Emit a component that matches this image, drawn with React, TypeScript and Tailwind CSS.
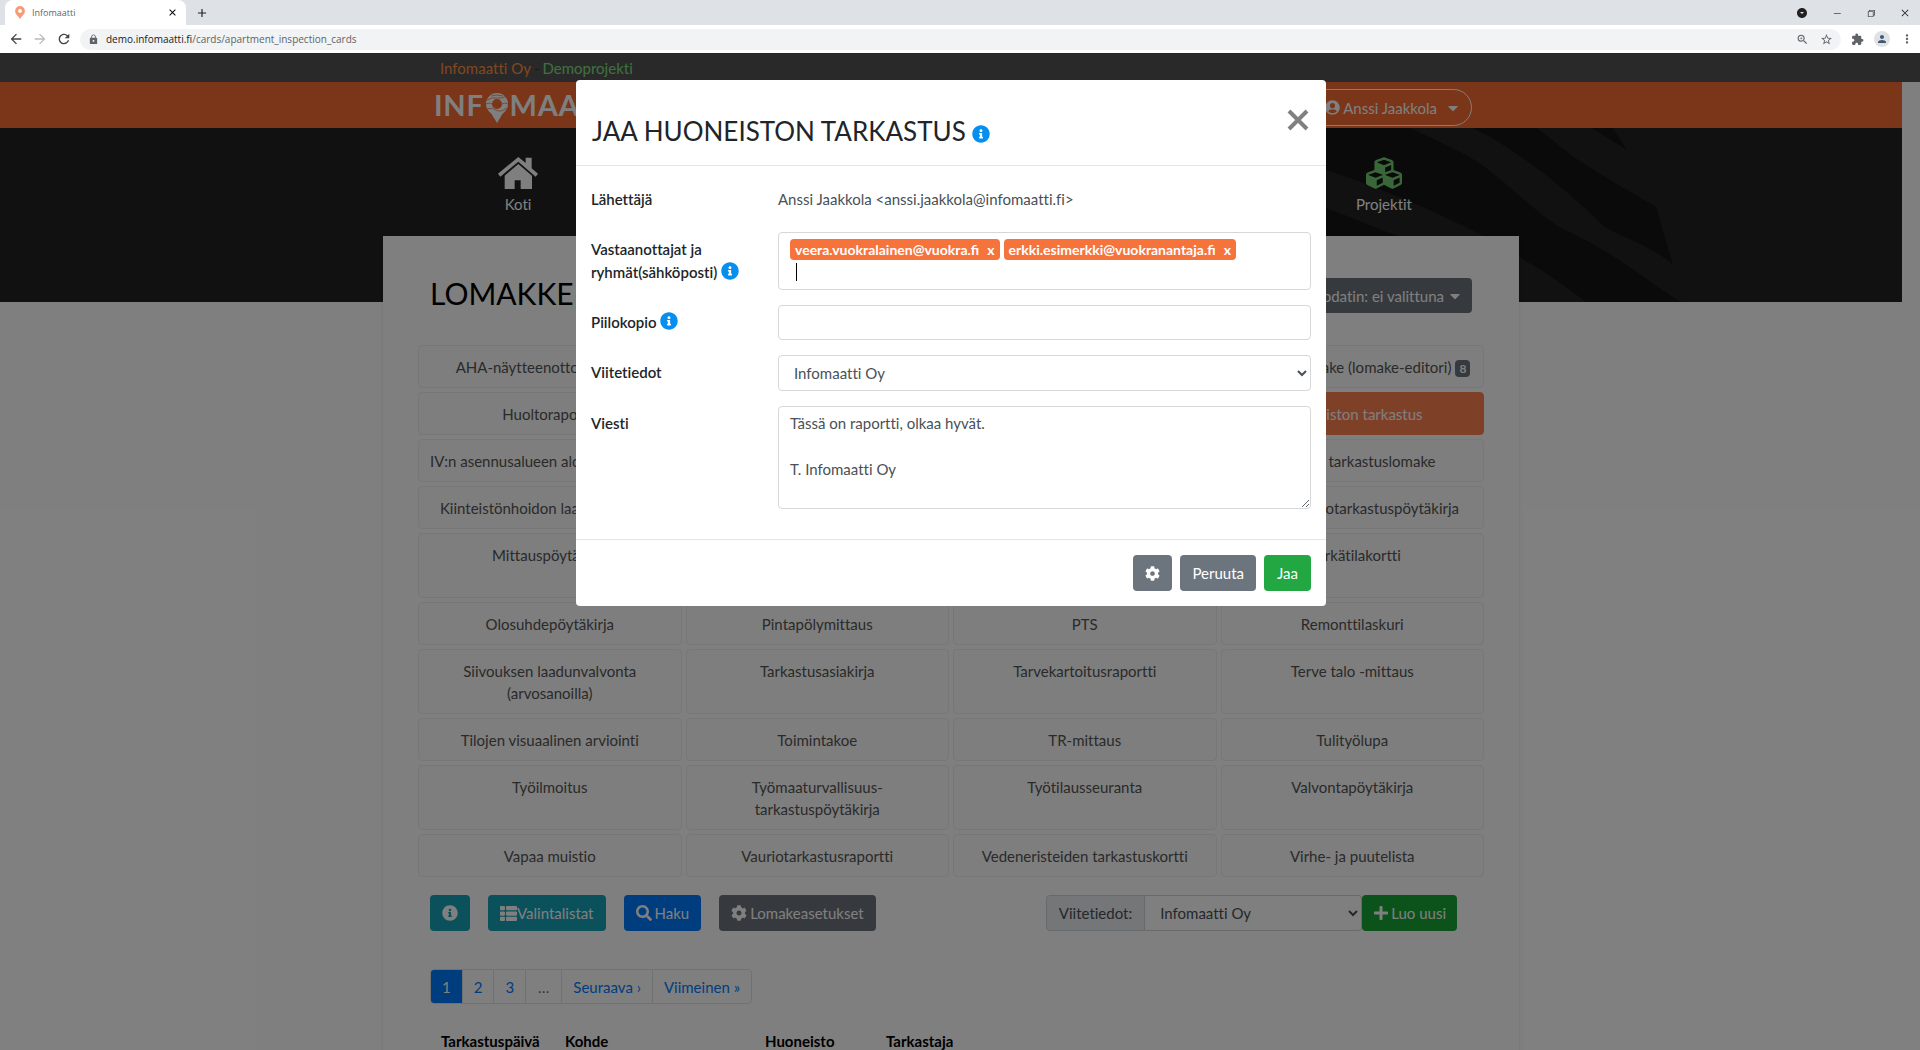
import React from 'react';
import { FaCubes, FaInfoCircle, FaUserCircle, FaCaretDown, FaThList, FaSearch, FaCog, FaPlus } from 'react-icons/fa';
import { MdArrowBack, MdArrowForward, MdRefresh, MdLock, MdZoomIn, MdStarBorder, MdExtension, MdPerson, MdMoreVert, MdArrowDropDownCircle, MdClose, MdAdd } from 'react-icons/md';
import { VscChromeMinimize, VscChromeRestore, VscChromeClose } from 'react-icons/vsc';

const forms = [
  'AHA-näytteenottopöytäkirja', 'Asbestikartoitus', 'Energiaselvitys', 'Esimerkkilomake (lomake-editori)',
  'Huoltoraportti', 'Huoltokirja', 'Huomautus', 'Huoneiston tarkastus',
  'IV:n asennusalueen aloituspöytäkirja', 'IV-mittaus', 'Katselmus', 'Kohteen tarkastuslomake',
  'Kiinteistönhoidon laadunvalvonta', 'Kosteusmittaus', 'Kuntoarvio', 'Käyttöönottotarkastuspöytäkirja',
  'Mittauspöytäkirja', 'Muistio', 'Määrälaskenta\n(tilat)', 'Märkätilakortti',
  'Olosuhdepöytäkirja', 'Pintapölymittaus', 'PTS', 'Remonttilaskuri',
  'Siivouksen laadunvalvonta (arvosanoilla)', 'Tarkastusasiakirja', 'Tarvekartoitusraportti', 'Terve talo -mittaus',
  'Tilojen visuaalinen arviointi', 'Toimintakoe', 'TR-mittaus', 'Tulityölupa',
  'Työilmoitus', 'Työmaaturvallisuus-\ntarkastuspöytäkirja', 'Työtilausseuranta', 'Valvontapöytäkirja',
  'Vapaa muistio', 'Vauriotarkastusraportti', 'Vedeneristeiden tarkastuskortti', 'Virhe- ja puutelista',
];

const recipients = ['veera.vuokralainen@vuokra.fi', 'erkki.esimerkki@vuokranantaja.fi'];

const BrowserChrome: React.FC = () => (
  <div className="shrink-0 font-['Open_Sans',sans-serif] text-[#5f6368]">
    <div className="flex h-[25px] items-center justify-between bg-[#dee1e6] pl-[5px]">
      <div className="flex h-full items-center">
        <div className="flex h-full w-[181px] items-center rounded-t-lg bg-white px-2">
          <svg viewBox="0 0 12 16" className="mx-[2px] h-[13px] w-[10px]">
            <path d="M6 0a6 6 0 0 0-6 6c0 4 3 5 6 10 3-5 6-6 6-10a6 6 0 0 0-6-6z" fill="#f79a76" />
            <circle cx="6" cy="6" r="2.4" fill="#fff" />
          </svg>
          <span className="ml-[5px] flex-1 text-[9px]">Infomaatti</span>
          <MdClose className="size-[11px] text-black" />
        </div>
        <MdAdd className="ml-[9px] size-[14px] text-[#222]" />
      </div>
      <div className="flex items-center gap-6 pr-[10px] text-[#222]">
        <MdArrowDropDownCircle className="size-3" />
        <VscChromeMinimize className="size-[10px]" />
        <VscChromeRestore className="size-[10px]" />
        <VscChromeClose className="size-[10px]" />
      </div>
    </div>
    <div className="flex h-7 items-center bg-white pl-2 pr-[6px]">
      <MdArrowBack className="size-4 text-[#444]" />
      <MdArrowForward className="ml-2 size-4 text-[#bbb]" />
      <MdRefresh className="ml-2 size-4 text-[#444]" />
      <div className="ml-2 flex h-[21px] flex-1 items-center rounded-full bg-[#f1f3f4] px-2">
        <MdLock className="size-[11px]" />
        <span className="ml-[7px] flex-1 text-[10px]"><span className="text-[#202124]">demo.infomaatti.fi</span>/cards/apartment_inspection_cards</span>
        <MdZoomIn className="size-[13px]" />
        <MdStarBorder className="ml-[11px] size-[13px]" />
      </div>
      <MdExtension className="ml-[10px] size-[13px]" />
      <span className="ml-[10px] flex size-4 items-center justify-center rounded-full bg-[#dee1e6]"><MdPerson className="size-3 text-[#41586e]" /></span>
      <MdMoreVert className="ml-[10px] size-[14px]" />
    </div>
  </div>
);

const Logo: React.FC = () => (
  <a href="#" className="flex items-center text-[29px] font-bold tracking-wide text-white">
    INF
    <svg viewBox="0 0 24 32" className="mx-px mt-[5px] h-8 w-6" fill="none">
      <circle cx="12" cy="12" r="8" stroke="#fff" strokeWidth="6" />
      <path d="M6 21h12l-6 10z" fill="#fff" />
      <path d="M2 8q5-3 10-2t10-2M1 12q3-2 6 0M2 17q5-2 9 1t11-2M17 12q3-2 6 0M6 4q6-2 12 0" stroke="#f66a31" strokeWidth="0.7" />
    </svg>
    MAATTI
  </a>
);

const House: React.FC = () => (
  <svg viewBox="0 0 120 96" className="h-8 w-10" fill="currentColor" aria-hidden="true">
    <path d="M61 0l22 18V2h18v32l19 16-7 9L61 14 7 59 0 50z" />
    <path d="M61 21l41 35v40H68V70H50v26H20V56z" />
  </svg>
);

const Stripes: React.FC = () => (
  <svg viewBox="0 0 577 174" className="absolute right-0 top-0 h-full w-[577px]" fill="#141414" aria-hidden="true">
    <path d="M0 0H85C110 12 130 20 151 33C190 60 215 90 240 102C300 130 330 160 357 174H261C230 150 210 138 194 129C150 100 60 60 0 42z" />
    <path d="M148 0H212L250 30C280 50 310 66 331 79L348 137C330 120 300 110 281 100C240 60 190 20 148 0z" />
    <path d="M267 0H288L302 22z" />
    <path d="M0 80C30 90 50 100 73 108H0z" />
  </svg>
);

const Info: React.FC = () => (
  <FaInfoCircle className="inline size-[18px] align-[-2px] text-[#078ff0]" />
);

const FormPage: React.FC = () => (
  <div>
    <div className="h-[29px] bg-[#525252]">
      <div className="mx-auto flex h-full max-w-[1040px] items-center gap-[3px] pr-[18px]">
        <a href="#" className="text-[#ff9040]">Infomaatti Oy</a>
        <span className="text-[#333]">-</span>
        <a href="#" className="text-[#80e080]">Demoprojekti</a>
      </div>
    </div>
    <div className="pr-[18px]">
      <header className="bg-[#f66a31]">
        <div className="mx-auto flex h-[46px] max-w-[1042px] items-center justify-between pl-1">
          <Logo />
          <button className="mb-[2px] flex h-[37px] items-center gap-[3px] self-end rounded-full border border-white pl-6 pr-[13px] text-white">
            <FaUserCircle className="size-[15px]" />
            Anssi Jaakkola
            <FaCaretDown className="ml-2 h-4 w-[10px]" />
          </button>
        </div>
      </header>
      <div className="relative h-[174px] bg-[#222]">
        <Stripes />
        <nav className="relative mx-auto flex max-w-[1042px] justify-between px-[53px] pt-[29px] text-white">
          <a href="#" className="flex w-[70px] flex-col items-center gap-1"><House />Koti</a>
          <a href="#" className="flex w-[70px] flex-col items-center gap-1"><FaCubes className="-my-0.5 size-9 text-[#74ce74]" />Projektit</a>
        </nav>
      </div>
      <main className="relative mx-auto -mt-[66px] max-w-[1136px] bg-white px-[35px] pb-10 pt-[42px] shadow">
        <div className="flex items-start justify-between px-3">
          <h1 className="text-[30px] leading-[30px] text-black">LOMAKKEET</h1>
          <button className="flex h-[35px] items-center gap-[6px] rounded bg-[#6c757d] px-3 text-white">Suodatin: ei valittuna <FaCaretDown className="h-4 w-[10px]" /></button>
        </div>
        <div className="mt-8 grid grid-cols-4 gap-1">
          {forms.map((name) => {
            const active = name === 'Huoneiston tarkastus';
            return (
              <button
                key={name}
                className={`flex items-start justify-center whitespace-pre-line rounded border px-1 pb-[9px] pt-[10px] ${active ? 'border-[#ff8150] bg-[#ff8150] text-white' : 'border-[#efefef] bg-[#fcfcfc] text-[#555]'}`}
              >
                <span className="max-w-[245px]">
                  {name}
                  {name.includes('editori') && <span className="ml-1 rounded bg-[#6c757d] px-1 py-px text-xs font-bold text-white">8</span>}
                </span>
              </button>
            );
          })}
        </div>
        <div className="mt-[18px] flex h-9 items-stretch pl-3 pr-[27px] text-white">
          <button aria-label="Ohje" className="rounded bg-[#17a2b8] px-3"><FaInfoCircle className="size-4" /></button>
          <button className="ml-[18px] flex items-center rounded bg-[#17a2b8] px-3"><FaThList className="size-[17px]" />Valintalistat</button>
          <button className="ml-[18px] flex items-center gap-[3px] rounded bg-[#007bff] px-3"><FaSearch className="size-4" />Haku</button>
          <button className="ml-[18px] flex items-center gap-[3px] rounded bg-[#6c757d] px-3"><FaCog className="size-4" />Lomakeasetukset</button>
          <label htmlFor="ref" className="ml-auto flex items-center rounded-l border border-[#ced4da] bg-[#e9ecef] px-3 text-[#495057]">Viitetiedot:</label>
          <select id="ref" className="w-[217px] rounded-r border border-l-0 border-[#ced4da] bg-white px-[11px] text-[#495057]"><option>Infomaatti Oy</option></select>
          <button className="flex items-center gap-[2px] rounded bg-[#17a637] px-[11px]"><FaPlus className="size-4" />Luo uusi</button>
        </div>
        <nav aria-label="Sivut" className="ml-3 mt-[38px] flex h-[35px] w-fit divide-x divide-[#dee2e6] overflow-hidden rounded border border-[#dee2e6] text-[#007bff]">
          <a href="#" className="bg-[#007bff] px-[11px] py-[6px] text-white">1</a>
          <a href="#" className="px-[11px] py-[6px]">2</a>
          <a href="#" className="px-[11px] py-[6px]">3</a>
          <span className="px-3 py-[6px] text-[#6c757d]">…</span>
          <a href="#" className="px-[11px] py-[6px]">Seuraava ›</a>
          <a href="#" className="px-[11px] py-[6px]">Viimeinen »</a>
        </nav>
        <table className="ml-3 mt-[18px] w-[960px] table-fixed text-left text-black">
          <thead>
            <tr>
              <th className="w-[124px] px-[11px] py-2">Tarkastuspäivä</th>
              <th className="w-[200px] px-[11px] py-2">Kohde</th>
              <th className="w-[121px] px-[11px] py-2">Huoneisto</th>
              <th className="px-[11px] py-2">Tarkastaja</th>
            </tr>
          </thead>
        </table>
      </main>
    </div>
  </div>
);

const ShareDialog: React.FC = () => (
  <div role="dialog" aria-labelledby="share-title" className="w-full max-w-[750px] self-start rounded bg-white text-[#212529]">
    <div className="flex items-start justify-between border-b border-[#e4e7ea] pb-4 pl-4 pr-[17px] pt-[29px]">
      <h2 id="share-title" className="pt-1 text-[26px] leading-9">JAA HUONEISTON TARKASTUS <Info /></h2>
      <button type="button" aria-label="Sulje">
        <svg viewBox="0 0 22 22" className="size-[22px]" stroke="#808080" strokeWidth="4"><path d="M2 2l18 18M20 2L2 20" /></svg>
      </button>
    </div>
    <form className="grid grid-cols-[187px_1fr] gap-y-[15px] border-b border-[#e4e7ea] px-[15px] pb-[30px] pt-4 leading-[23px]">
      <span className="py-[6px] font-semibold">Lähettäjä</span>
      <span className="py-[6px] text-[#495057]">Anssi Jaakkola &lt;anssi.jaakkola@infomaatti.fi&gt;</span>
      <label htmlFor="to" className="py-[6px] font-semibold">Vastaanottajat ja ryhmät(sähköposti) <Info /></label>
      <div className="h-[58px] rounded border border-[#d5d8db] px-[11px] py-[6px]">
        <div className="flex gap-1 [font-variant-ligatures:common-ligatures]">
          {recipients.map((mail) => (
            <span key={mail} className="flex h-[21px] items-center gap-2 rounded bg-[#f6733c] px-[5px] text-sm font-bold text-white">
              {mail} <button type="button">x</button>
            </span>
          ))}
        </div>
        <input id="to" className="ml-[6px] mt-[3px] h-[18px] w-[100px] border-l border-black align-top outline-none" />
      </div>
      <label htmlFor="bcc" className="py-[6px] font-semibold">Piilokopio <Info /></label>
      <input id="bcc" className="h-[35px] rounded border border-[#d5d8db]" />
      <label htmlFor="refs" className="py-[6px] font-semibold">Viitetiedot</label>
      <select id="refs" className="h-9 rounded border border-[#d5d8db] bg-white px-[11px] text-[#495057]"><option>Infomaatti Oy</option></select>
      <label htmlFor="msg" className="py-[6px] font-semibold">Viesti</label>
      <textarea id="msg" className="h-[103px] rounded border border-[#d5d8db] px-[11px] py-[5px] text-[#495057]" defaultValue={'Tässä on raportti, olkaa hyvät.\n\nT. Infomaatti Oy'} />
    </form>
    <div className="flex justify-end gap-2 px-[15px] py-[15px] text-white">
      <button aria-label="Asetukset" className="h-9 rounded bg-[#6c757d] px-3"><FaCog className="size-[15px]" /></button>
      <button className="h-9 rounded bg-[#6c757d] px-3">Peruuta</button>
      <button className="h-9 rounded bg-[#22a743] px-[13px]">Jaa</button>
    </div>
  </div>
);

const App: React.FC = () => (
  <div className="flex h-screen flex-col overflow-hidden">
    <BrowserChrome />
    <div className="relative flex-1 overflow-hidden bg-white font-['Lato',sans-serif] text-[15px] leading-[22px] [font-variant-ligatures:no-common-ligatures]">
      <FormPage />
      <div className="absolute inset-0 flex justify-center bg-black/50 pr-[18px] pt-[27px]">
        <ShareDialog />
      </div>
    </div>
  </div>
);

export default App;
